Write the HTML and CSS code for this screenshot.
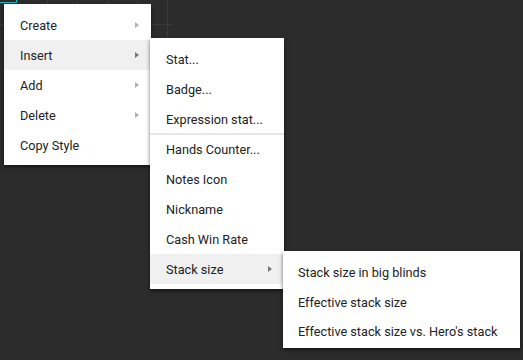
FILE: index.html
```html
<!DOCTYPE html>
<html lang="en">
<head>
	<meta charset="utf-8" />
	<title>Context menu</title>
	<link rel="stylesheet" href="styles.css">
</head>
<body>
<div id="canvas">
	<div class="sheet"><div class="selected-cell"></div></div>

	<ul class="menu" id="mainMenu">
		<li class="sub">Create</li>
		<li class="sub active">Insert</li>
		<li class="sub">Add</li>
		<li class="sub">Delete</li>
		<li>Copy Style</li>
	</ul>

	<ul class="menu" id="insertMenu">
		<li>Stat...</li>
		<li>Badge...</li>
		<li>Expression stat...</li>
		<li class="separator"></li>
		<li>Hands Counter...</li>
		<li>Notes Icon</li>
		<li>Nickname</li>
		<li>Cash Win Rate</li>
		<li class="sub active">Stack size</li>
	</ul>

	<ul class="menu" id="stackMenu">
		<li>Stack size in big blinds</li>
		<li>Effective stack size</li>
		<li>Effective stack size vs. Hero's stack</li>
	</ul>
</div>
</body>
</html>
```

FILE: styles.css
```css
html, body{
	margin: 0;
	height: 100%;
	background: #2c2c2c;
}
body{
	font-family: Roboto, "Liberation Sans", sans-serif;
	font-size: 12.7px;
	color: #222;
}

#canvas{
	position: relative;
	width: 523px;
	height: 360px;
	overflow: hidden;
}

/* faint spreadsheet grid behind the menus */
.sheet{
	position: absolute;
	left: 0;
	top: 0;
	width: 172px;
	height: 38px;
	background-image:
		linear-gradient(to right, #3a3a3a 1px, transparent 1px),
		linear-gradient(to bottom, #3a3a3a 1px, transparent 1px);
	background-size: 30px 30px;
	background-position: 17px 0, 0 24px;
}
.selected-cell{
	position: absolute;
	left: 0;
	top: 0;
	width: 16px;
	height: 2px;
	border-right: 1px solid #2ab3c2;
	border-bottom: 1px solid #2ab3c2;
}

.menu{
	position: absolute;
	list-style: none;
	margin: 0;
	padding: 6px 0 5px;
	background: #fff;
	box-shadow: 0 2px 4px rgba(0,0,0,.55);
}
.menu li{
	position: relative;
	height: 30px;
	line-height: 31px;
	padding-left: 16px;
	white-space: nowrap;
}
.menu li.active{
	background: #f0f0f0;
}
.menu li.sub::after{
	content: "";
	position: absolute;
	right: 12px;
	top: 12px;
	border-left: 4px solid #b0b0b0;
	border-top: 3.5px solid transparent;
	border-bottom: 3.5px solid transparent;
}
.menu li.sub.active::after{
	border-left-color: #777;
}
.menu li.separator{
	height: 2px;
	margin: -1px 0;
	padding: 0;
	background: #e6e6e6;
}

#mainMenu{
	left: 4px;
	top: 4px;
	width: 147px;
}
#insertMenu{
	left: 150px;
	top: 38px;
	width: 134px;
}
#stackMenu{
	left: 283px;
	top: 251px;
	width: 237px;
	padding-bottom: 2px;
}
#stackMenu li{
	padding-left: 15px;
	height: 29.5px;
	line-height: 31px;
}
```
